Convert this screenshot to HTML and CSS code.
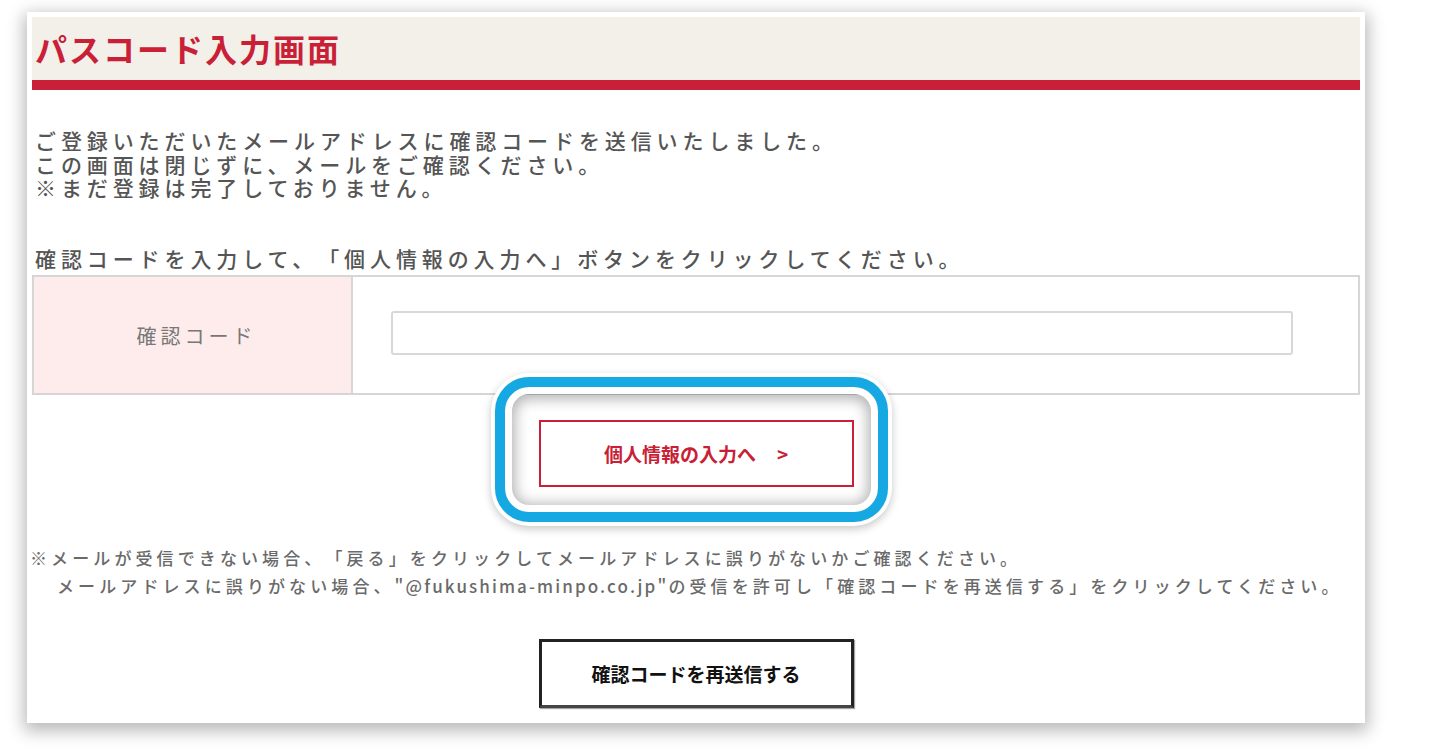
FILE: index.html
```html
<!DOCTYPE html>
<html lang="ja">
<head>
<meta charset="utf-8">
<title>パスコード入力画面</title>
<link rel="stylesheet" href="styles.css">
</head>
<body>
<div class="card">
  <div class="head"><h1 class="title">パスコード入力画面</h1></div>
  <div class="lead">
    <p class="msg">ご登録いただいたメールアドレスに確認コードを送信いたしました。<br>この画面は閉じずに、メールをご確認ください。<br>※まだ登録は完了しておりません。</p>
    <p class="instr">確認コードを入力して、「個人情報の入力へ」ボタンをクリックしてください。</p>
  </div>
  <div class="form">
    <div class="label">確認コード</div>
    <div class="field"><input class="code" type="text" aria-label="確認コード"></div>
  </div>
  <div class="btnrow">
    <button class="next" type="button">個人情報の入力へ<span class="chev">&gt;</span></button>
  </div>
  <div class="highlight"></div>
  <div class="notes">
    <div class="note">※メールが受信できない場合、「戻る」をクリックしてメールアドレスに誤りがないかご確認ください。</div>
    <div class="note indent">メールアドレスに誤りがない場合、<span class="ascii">"@fukushima-minpo.co.jp"</span>の受信を許可し「確認コードを再送信する」をクリックしてください。</div>
  </div>
  <div class="btnrow resendrow">
    <button class="resend" type="button">確認コードを再送信する</button>
  </div>
</div>
</body>
</html>
```

FILE: styles.css
```css
html, body {
  margin: 0;
  padding: 0;
  background: #ffffff;
}
body {
  font-family: "Noto Sans CJK JP", "Noto Sans", sans-serif;
  width: 1429px;
  height: 754px;
  overflow: hidden;
  text-spacing-trim: space-all;
}
.card {
  position: relative;
  box-sizing: border-box;
  margin: 12px 0 0 27px;
  width: 1338px;
  height: 711px;
  padding: 5px 5px 0 5px;
  background: #ffffff;
  box-shadow: 0 5px 16px 3px rgba(0, 0, 0, 0.28);
}
.head {
  height: 63px;
  background: #f3efe9;
  border-bottom: 10px solid #c91f37;
}
.title {
  margin: 0;
  padding-left: 3px;
  font-size: 32px;
  line-height: 63px;
  font-weight: 700;
  letter-spacing: 2px;
  color: #c91f37;
}
.lead {
  padding-left: 3px;
  color: #555555;
  font-size: 21px;
  font-weight: 500;
  letter-spacing: 4.9px;
  line-height: 23.5px;
}
.msg {
  margin: 39px 0 0 0;
}
.instr {
  margin: 47px 0 0 0;
}
.form {
  display: grid;
  grid-template-columns: 319px 1fr;
  height: 120px;
  margin-top: 5px;
  box-sizing: border-box;
  border: 2px solid #d6d6d6;
}
.label {
  display: flex;
  align-items: center;
  justify-content: center;
  background: #fdeceb;
  border-right: 2px solid #d6d6d6;
  color: #777777;
  font-size: 20px;
  letter-spacing: 4px;
  padding-left: 8px;
}
.field {
  display: flex;
  align-items: center;
  padding-left: 38px;
}
.code {
  box-sizing: border-box;
  width: 902px;
  height: 44px;
  border: 2px solid #d8d8d8;
  border-radius: 3px;
  background: #ffffff;
  margin-top: -4px;
}
.btnrow {
  display: flex;
  justify-content: center;
  margin-top: 25px;
}
.next {
  box-sizing: border-box;
  width: 315px;
  height: 67px;
  margin: 0;
  padding: 0;
  background: #ffffff;
  border: 2px solid #c91f37;
  color: #c91f37;
  font-family: "Noto Sans CJK JP", "Noto Sans", sans-serif;
  font-size: 19px;
  font-weight: 700;
}
.chev {
  margin-left: 21px;
  font-weight: 700;
}
.highlight {
  position: absolute;
  left: 468px;
  top: 365px;
  width: 393px;
  height: 145px;
  box-sizing: border-box;
  border: 10px solid #15a8e2;
  border-radius: 34px;
  box-shadow:
    0 0 0 4px #ffffff,
    0 3px 8px 4px rgba(0, 0, 0, 0.22),
    inset 0 0 0 7px #ffffff,
    inset 0 2px 14px 10px rgba(0, 0, 0, 0.3);
  pointer-events: none;
}
.notes {
  margin: 57px 0 0 -2px;
  color: #6a6a6a;
  font-size: 17px;
  font-weight: 500;
  letter-spacing: 4.1px;
  line-height: 28px;
  white-space: nowrap;
}
.ascii {
  letter-spacing: 2.1px;
}
.indent {
  padding-left: 27px;
}
.resendrow {
  margin-top: 39px;
}
.resend {
  box-sizing: border-box;
  width: 315px;
  height: 69px;
  margin: 0;
  padding: 0;
  background: #ffffff;
  border: 3px solid #222222;
  border-bottom-color: #444444;
  box-shadow: 1px 1px 1px rgba(0, 0, 0, 0.35);
  color: #111111;
  font-family: "Noto Sans CJK JP", "Noto Sans", sans-serif;
  font-size: 19px;
  font-weight: 700;
}
```
